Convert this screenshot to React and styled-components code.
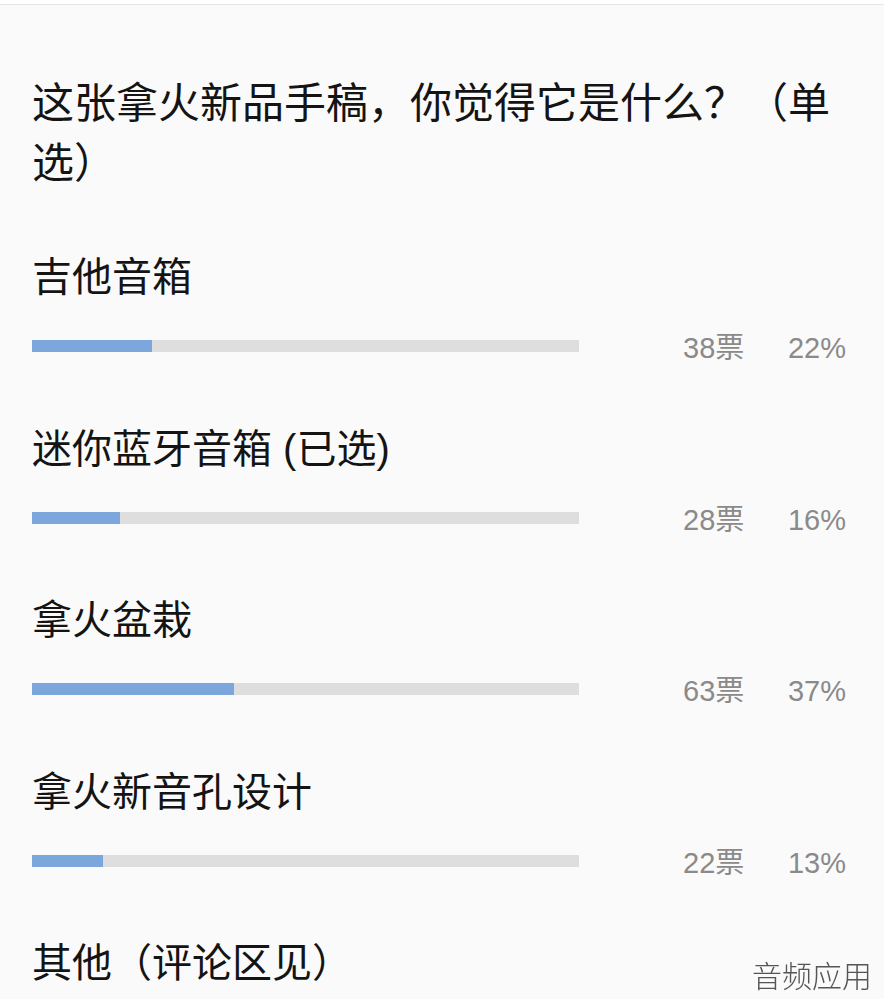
import React from "react";
import styled, { createGlobalStyle } from "styled-components";

const Global = createGlobalStyle`
  html, body { margin: 0; padding: 0; background: #fafafa; }
  body {
    font-family: "Liberation Sans", "Noto Sans CJK SC", sans-serif;
    color: #151515;
  }
`;

const Page = styled.div`
  background: #fafafa;
  min-height: 999px;
`;

const TopStrip = styled.div`
  height: 4px;
  background: #ffffff;
  border-bottom: 1px solid #e6e6e6;
`;

const Content = styled.div`
  padding: 65px 38px 0 32px;
`;

const Title = styled.h1`
  margin: 0;
  font-family: "Noto Sans CJK SC", sans-serif;
  font-weight: 400;
  font-size: 42px;
  line-height: 60px;
  color: #141414;
  padding-right: 4px;
`;

const List = styled.div`
  display: flex;
  flex-direction: column;
  gap: 54.5px;
  margin-top: 59px;
`;

const Option = styled.div`
  display: flex;
  flex-direction: column;
`;

const Label = styled.div`
  font-size: 40px;
  line-height: 56px;
  color: #141414;
  white-space: nowrap;
`;

const Row = styled.div`
  display: flex;
  align-items: center;
  height: 40px;
  margin-top: 21px;
`;

const Track = styled.div`
  width: 547px;
  height: 12px;
  background: #dedede;
  flex: none;
`;

const Fill = styled.div`
  height: 100%;
  background: #7ba7dc;
`;

const Stats = styled.div`
  flex: 1;
  display: flex;
  align-items: baseline;
  justify-content: space-between;
  margin-left: 104px;
  margin-top: 4px;
  font-size: 29px;
  line-height: 34px;
  color: #8a8a8a;
  white-space: nowrap;
`;

const Watermark = styled.div`
  position: fixed;
  right: 12px;
  bottom: 10px;
  font-family: "Noto Sans CJK SC", sans-serif;
  font-weight: 300;
  font-size: 30px;
  line-height: 30px;
  color: #555555;
`;

const options = [
  { label: "吉他音箱", votes: 38, pct: 22 },
  { label: "迷你蓝牙音箱 (已选)", votes: 28, pct: 16 },
  { label: "拿火盆栽", votes: 63, pct: 37 },
  { label: "拿火新音孔设计", votes: 22, pct: 13 },
  { label: "其他（评论区见）" },
];

export default function App() {
  return (
    <Page>
      <Global />
      <TopStrip />
      <Content>
        <Title>这张拿火新品手稿，你觉得它是什么？（单选）</Title>
        <List>
          {options.map((o) => (
            <Option key={o.label}>
              <Label>{o.label}</Label>
              {o.votes != null && (
                <Row>
                  <Track>
                    <Fill style={{ width: `${o.pct}%` }} />
                  </Track>
                  <Stats>
                    <span>{o.votes}票</span>
                    <span>{o.pct}%</span>
                  </Stats>
                </Row>
              )}
            </Option>
          ))}
        </List>
      </Content>
      <Watermark>音频应用</Watermark>
    </Page>
  );
}
